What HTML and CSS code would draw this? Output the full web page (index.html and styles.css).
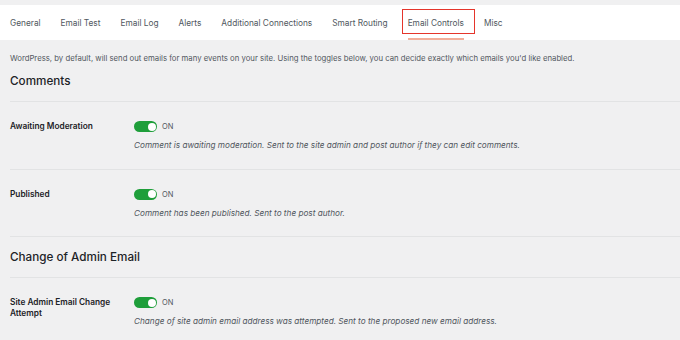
FILE: index.html
```html
<!DOCTYPE html>
<html>
<head>
<meta charset="utf-8">
<link rel="stylesheet" href="styles.css">
</head>
<body>
<div class="top-strip"></div>
<nav class="tabs">
  <a class="tab">General</a>
  <a class="tab">Email Test</a>
  <a class="tab">Email Log</a>
  <a class="tab">Alerts</a>
  <a class="tab">Additional Connections</a>
  <a class="tab">Smart Routing</a>
  <a class="tab active">Email Controls</a>
  <a class="tab">Misc</a>
</nav>
<main class="content">
  <p class="intro">WordPress, by default, will send out emails for many events on your site. Using the toggles below, you can decide exactly which emails you'd like enabled.</p>

  <section class="group">
    <h2 class="group-title">Comments</h2>
    <div class="row">
      <div class="label">Awaiting Moderation</div>
      <div class="field">
        <label class="toggle-line"><span class="toggle"><span class="knob"></span></span><span class="state">ON</span></label>
        <p class="desc">Comment is awaiting moderation. Sent to the site admin and post author if they can edit comments.</p>
      </div>
    </div>
    <div class="row">
      <div class="label">Published</div>
      <div class="field">
        <label class="toggle-line"><span class="toggle"><span class="knob"></span></span><span class="state">ON</span></label>
        <p class="desc">Comment has been published. Sent to the post author.</p>
      </div>
    </div>
  </section>

  <section class="group">
    <h2 class="group-title">Change of Admin Email</h2>
    <div class="row">
      <div class="label">Site Admin Email Change Attempt</div>
      <div class="field">
        <label class="toggle-line"><span class="toggle"><span class="knob"></span></span><span class="state">ON</span></label>
        <p class="desc">Change of site admin email address was attempted. Sent to the proposed new email address.</p>
      </div>
    </div>
  </section>
</main>
</body>
</html>
```

FILE: styles.css
```css
* { box-sizing: border-box; }
html, body { margin: 0; padding: 0; }
body {
  background: #f0f0f1;
  font-family: Inter, "Noto Sans", sans-serif;
  color: #1d2327;
  overflow: hidden;
}
.top-strip { height: 5px; }
.tabs {
  background: #fff;
  height: 35px;
  display: flex;
  align-items: center;
  gap: 20px;
  padding-left: 10px;
}
.tab {
  position: relative;
  font-size: 8.3px;
  color: #50575e;
  line-height: 12px;
}
.tab.active::before {
  content: "";
  position: absolute;
  left: -6px;
  right: -11px;
  top: -8px;
  bottom: -5px;
  border: 1.5px solid #e5352b;
}
.tab.active::after {
  content: "";
  position: absolute;
  left: 0;
  right: 0;
  bottom: -11px;
  height: 2px;
  background: #f2ae9a;
}
.content { padding: 0 0 0 10px; }
.intro {
  margin: 0;
  padding-top: 12px;
  font-size: 7.75px;
  line-height: 12px;
  color: #50575e;
  white-space: nowrap;
}
.group-title {
  margin: 0;
  padding: 10px 0 10px;
  font-size: 11.7px;
  font-weight: 500;
  line-height: 20px;
  border-bottom: 1px solid #e2e3e4;
}
.intro + .group .group-title { padding-top: 7px; }
.row {
  display: grid;
  grid-template-columns: 124px 1fr;
  padding: 19px 0 17px;
  border-bottom: 1px solid #e2e3e4;
  height: 67.5px;
}
.group:last-child .row:last-child { border-bottom: none; }
.label {
  font-size: 8.3px;
  font-weight: 600;
  line-height: 11px;
  padding-right: 10px;
}
.toggle-line {
  display: flex;
  align-items: center;
  gap: 5px;
  height: 11px;
}
.toggle {
  width: 23px;
  height: 11px;
  border-radius: 6px;
  background: #1e9e3a;
  position: relative;
}
.knob {
  position: absolute;
  right: 1.5px;
  top: 1.5px;
  width: 8px;
  height: 8px;
  border-radius: 50%;
  background: #fff;
}
.state {
  font-size: 7.5px;
  color: #50575e;
}
.desc {
  margin: 7px 0 0;
  font-size: 8.2px;
  font-style: italic;
  line-height: 12px;
  color: #50575e;
}
```
